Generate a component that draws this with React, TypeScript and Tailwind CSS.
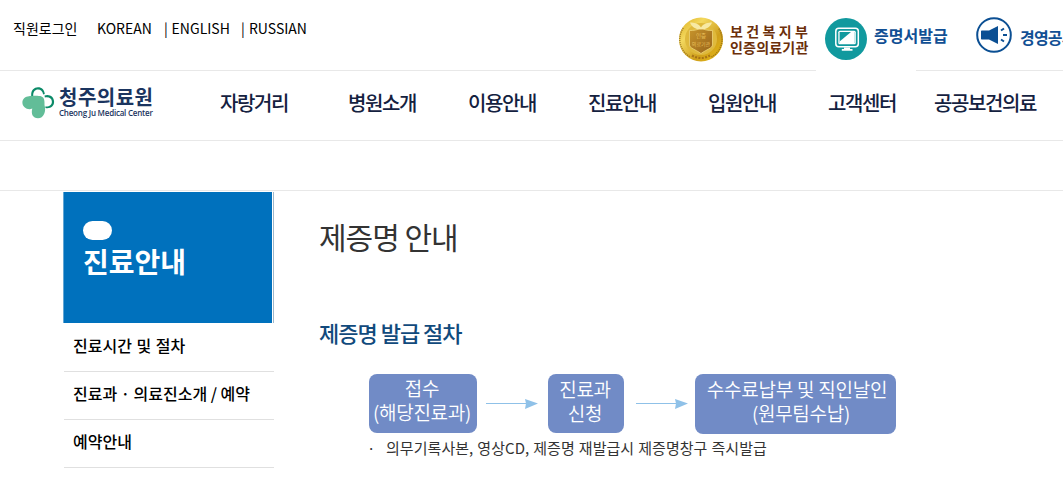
const menus = [
  "자랑거리",
  "병원소개",
  "이용안내",
  "진료안내",
  "입원안내",
  "고객센터",
  "공공보건의료",
];

const sideMenus = ["진료시간 및 절차", "진료과 · 의료진소개 / 예약", "예약안내"];

function Logo() {
  return (
    <a className="mt-[15px] ml-[22px] flex h-9 w-[134px] shrink-0">
      <svg width="33" height="34" viewBox="0 0 33 34" fill="none">
        <path
          d="M9.200 14V8.500c0-4.200 2.900-7.200 6.800-7.200s6.300 2.600 6.800 6.800l-1.600.3C20.500 5 18.700 3.500 16 3.500c-3 0-4.800 2.400-4.800 5.700v5Z"
          fill="#0b8a68"
        />
        <path
          d="M22.500 9.600c4.800-1.900 9.600 1.200 9.600 6.100 0 4.500-3.700 7.200-8.600 6.300l-.2-1.500c4 .4 6.600-1.700 6.600-4.800 0-3.200-3-5-7-4.200Z"
          fill="#0b8a68"
        />
        <path
          d="M7 10.300c2-.5 10-.8 12.500.2 2.500 1 3.300 3.500 3 8.500 2 6.500-.8 13.300-6.500 13.300-5.200 0-7.200-4.500-5.700-9.800C6 24.500.4 21.500.4 16.500c0-3.400 3.100-6.200 6.600-6.200Z"
          fill="#62bd98"
        />
      </svg>
      <span className="ml-[4px] flex flex-col text-[#1b3560]">
        <span className="h-[22px] text-[20px] leading-[21px] font-bold tracking-[0.5px] whitespace-nowrap">
          청주의료원
        </span>
        <span className="h-[9px] font-['Open_Sans','Noto_Sans',sans-serif] text-[8px] leading-[9px] font-semibold tracking-[-0.22px] whitespace-nowrap">
          Cheong Ju Medical Center
        </span>
      </span>
    </a>
  );
}

function Medal() {
  return (
    <svg className="shrink-0" width="44" height="45" viewBox="0 0 44 45">
      <defs>
        <linearGradient id="gold" x1="0" y1="0" x2="1" y2="1">
          <stop offset="0" stopColor="#dcae1e" />
          <stop offset="0.3" stopColor="#f3d85e" />
          <stop offset="0.65" stopColor="#cf9f1c" />
          <stop offset="1" stopColor="#e9bd12" />
        </linearGradient>
        <linearGradient id="shield" x1="0" y1="0" x2="1" y2="1">
          <stop offset="0" stopColor="#c8952c" />
          <stop offset="1" stopColor="#96621a" />
        </linearGradient>
      </defs>
      <circle cx="22" cy="22.500" r="22" fill="url(#gold)" />
      <circle cx="22" cy="22" r="16" fill="#dfb93c" />
      <path
        d="M4.300 11a20 20 0 0 0 7 29M32.500 40a20 20 0 0 0 7-29"
        fill="none"
        stroke="#8a6212"
        strokeWidth="1.500"
        strokeDasharray="1.200 0.900"
        opacity="0.7"
      />
      <path
        d="M13 38.500q9 5 18 0"
        fill="none"
        stroke="#8a5010"
        strokeWidth="2.200"
        strokeDasharray="2 1.400"
        opacity="0.6"
      />
      <path
        d="M10.500 13.500c4 0 8.500-.5 11.500-2.500 3 2 7.500 2.500 11.500 2.500V28c0 3-6 4.500-11.500 8.500C16.500 32.500 10.500 31 10.500 28Z"
        fill="url(#shield)"
        stroke="#eed47a"
        strokeWidth="0.8"
      />
      <path
        d="M11 5.500c4 0 9 1 11 5 2-4 7-5 11-5-1.500 4-5 7-11 7s-9.500-3-11-7Z"
        fill="#f7e9a4"
      />
      <text x="22" y="20.500" fontSize="5.500" fill="#e8bf58" textAnchor="middle">
        인증
      </text>
      <text x="22" y="28.500" fontSize="5" fill="#e8bf58" textAnchor="middle">
        의료기관
      </text>
    </svg>
  );
}

function MonitorIcon() {
  return (
    <svg className="shrink-0" width="42" height="42" viewBox="0 0 42 42">
      <circle cx="21" cy="21" r="21" fill="#11999e" />
      <rect x="10.800" y="10.300" width="22.500" height="18.500" rx="3" fill="none" stroke="#fff" strokeWidth="1.500" />
      <rect x="13.300" y="12.800" width="17.500" height="13.500" rx="1.500" fill="#fff" />
      <rect x="14.600" y="14" width="15" height="11" fill="#11999e" />
      <path d="M26 14h3.600v11H14.600v-1.500Z" fill="#fff" />
      <path d="M19 29.500h6V31h2.500v1.800H16.800V31H19Z" fill="#fff" />
    </svg>
  );
}

function SpeakerIcon() {
  return (
    <svg className="shrink-0" width="36" height="36" viewBox="0 0 36 36">
      <circle cx="18" cy="18" r="16.800" fill="#fff" stroke="#0b4f93" strokeWidth="2" />
      <path d="M5 14.500c0-.6.4-1 1-1h7l9-4.500v18l-9-4.500H6c-.6 0-1-.4-1-1Z" fill="#0b4f93" />
      <path
        d="M25 13.500l3-2M27 18h4M25 22.500l3 2"
        stroke="#0b4f93"
        strokeWidth="2"
      />
    </svg>
  );
}

function Arrow() {
  return (
    <svg className="mt-[25px] shrink-0" width="52" height="10" viewBox="0 0 52 10">
      <path d="M0 4.500h41" stroke="#8fc1e8" />
      <path d="M39 0l13 4.500L39 10l1-5.500Z" fill="#8fc1e8" />
    </svg>
  );
}

export default function App() {
  return (
    <div className="h-[477px] w-[1063px] overflow-hidden bg-white font-['Noto_Sans_CJK_KR',sans-serif] text-black">
      <header>
        <div className="flex h-[70px]">
          <div className="flex h-5 w-[679px] shrink-0 pt-[18px] pl-[13px] text-sm leading-5 whitespace-nowrap">
            <a className="w-[84px]">직원로그인</a>
            <a className="w-[67px]">KOREAN</a>
            <a className="w-[77px] [word-spacing:0.7px]">| ENGLISH</a>
            <a className="[word-spacing:1px]">| RUSSIAN</a>
          </div>
          <a className="mt-[17px] flex w-[146px] shrink-0">
            <Medal />
            <span className="ml-[7px] pt-[6px] text-[14px] leading-4 font-bold whitespace-nowrap text-[#6b2f0a]">
              <span className="block tracking-[3.4px]">보건복지부</span>
              <span className="block tracking-[0.2px]">인증의료기관</span>
            </span>
          </a>
          <a className="mt-[18px] flex w-[151px] shrink-0">
            <MonitorIcon />
            <span className="ml-[7px] pt-[5px] text-base leading-6 font-bold whitespace-nowrap text-[#114f94]">
              증명서발급
            </span>
          </a>
          <a className="mt-[17px] flex shrink-0">
            <SpeakerIcon />
            <span className="ml-[8px] pt-[8px] text-base leading-6 font-bold tracking-[-0.8px] whitespace-nowrap text-[#114f94]">
              경영공시
            </span>
          </a>
        </div>
        <div className="flex h-px justify-between">
          <div className="w-[816px] bg-[#e8e8e8]" />
          <div className="w-[147px] bg-[#e8e8e8]" />
        </div>
        <nav className="flex h-[70px] border-b border-[#e8e8e8]">
          <Logo />
          <ul className="ml-[38px] flex pt-[16px] text-center text-[20px] leading-[31px] font-medium tracking-[-1.4px] whitespace-nowrap text-[#14213f]">
            {menus.map((menu) => (
              <li key={menu} className="w-[120px] shrink-0 first:mr-2 last:ml-[3px]">
                {menu}
              </li>
            ))}
          </ul>
        </nav>
        <div className="h-[50px] border-b border-[#e8e8e8]" />
      </header>

      <div className="flex">
        <aside className="mt-px ml-[63px] w-[211px] shrink-0">
          <div className="flex h-[131px] border-r border-[#9db8cc] pr-px">
            <div className="flex-1 border-l border-[#62a6d4] bg-[#0071bd] pt-[29px] pl-[19px]">
              <div className="h-[19px] w-[29px] rounded-[10px] bg-white" />
              <h2 className="text-[28px] leading-[42px] font-bold text-white">진료안내</h2>
            </div>
          </div>
          <ul className="ml-px">
            {sideMenus.map((menu, i) => (
              <li
                key={menu}
                className={`border-b border-[#e0e0e0] pl-[9px] text-base leading-6 font-medium whitespace-nowrap ${
                  i === 0 ? "h-[49px] pt-[10px] [word-spacing:1px]" : "h-12 pt-[9px]"
                }`}
              >
                {menu}
              </li>
            ))}
          </ul>
        </aside>

        <main className="ml-[45px]">
          <h1 className="mt-[23px] text-[30px] leading-[44px] tracking-[-1px] text-[#333]">
            제증명 안내
          </h1>
          <h3 className="mt-[58px] text-[22px] leading-8 font-medium tracking-[-1px] text-[#114a7c]">
            제증명 발급 절차
          </h3>
          <div className="mt-[26px] ml-[50px] flex text-center text-[19px] leading-6 font-[350] whitespace-nowrap text-white">
            <div className="h-[59px] w-[108px] rounded-lg bg-[#718bc6] pt-[2px] pr-[2px] tracking-[-0.3px]">
              접수
              <br />
              (해당진료과)
            </div>
            <div className="ml-[9px]">
              <Arrow />
            </div>
            <div className="ml-[10px] h-[59px] w-[76px] rounded-lg bg-[#718bc6] pt-[3px] pr-[2px] tracking-[-0.3px]">
              진료과
              <br />
              신청
            </div>
            <div className="ml-[12px]">
              <Arrow />
            </div>
            <div className="ml-[7px] h-[60px] w-[201px] rounded-lg bg-[#718bc6] pt-[3px] pl-[3px] tracking-[-0.25px]">
              수수료납부 및 직인날인
              <br />
              <span className="ml-2">(원무팀수납)</span>
            </div>
          </div>
          <p className="ml-[48px] flex text-[15px] leading-7 tracking-[0.05px] whitespace-nowrap text-[#333] [word-spacing:0.6px]">
            <span className="w-[19px]">·</span>
            의무기록사본, 영상CD, 제증명 재발급시 제증명창구 즉시발급
          </p>
        </main>
      </div>
    </div>
  );
}
